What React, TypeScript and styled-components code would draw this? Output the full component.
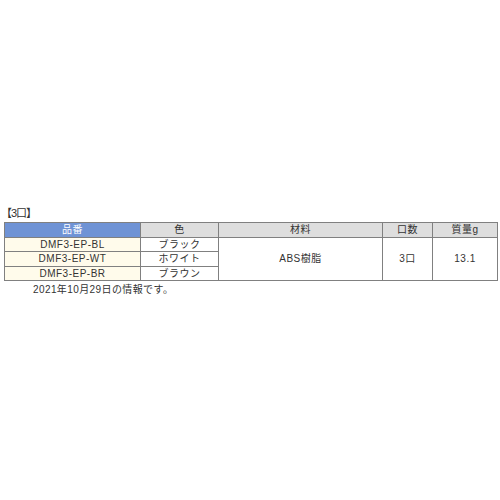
import React from 'react';
import styled, { createGlobalStyle } from 'styled-components';

const GlobalStyle = createGlobalStyle`
  html, body {
    margin: 0;
    padding: 0;
    background: #ffffff;
  }
  body {
    font-family: "Liberation Sans", "Noto Sans CJK JP", sans-serif;
    color: #222222;
  }
`;

type Row = {
  code: string;
  color: string;
};

const rows: Row[] = [
  { code: 'DMF3-EP-BL', color: 'ブラック' },
  { code: 'DMF3-EP-WT', color: 'ホワイト' },
  { code: 'DMF3-EP-BR', color: 'ブラウン' },
];

function App() {
  return (
    <Page>
      <GlobalStyle />
      <Section>
        <Title>【3口】</Title>
        <SpecTable>
          <colgroup>
            <col style={{ width: 136 }} />
            <col style={{ width: 78 }} />
            <col style={{ width: 164 }} />
            <col style={{ width: 50 }} />
            <col />
          </colgroup>
          <thead>
            <tr>
              <HeadCell $primary>品番</HeadCell>
              <HeadCell>色</HeadCell>
              <HeadCell>材料</HeadCell>
              <HeadCell>口数</HeadCell>
              <HeadCell>質量g</HeadCell>
            </tr>
          </thead>
          <tbody>
            {rows.map((row, index) => (
              <tr key={row.code}>
                <CodeCell>{row.code}</CodeCell>
                <Cell>{row.color}</Cell>
                {index === 0 && (
                  <>
                    <Cell rowSpan={3}>ABS樹脂</Cell>
                    <Cell rowSpan={3}>3口</Cell>
                    <Cell rowSpan={3}>13.1</Cell>
                  </>
                )}
              </tr>
            ))}
          </tbody>
        </SpecTable>
        <Note>2021年10月29日の情報です。</Note>
      </Section>
    </Page>
  );
}

const Page = styled.div`
  width: 500px;
  height: 500px;
  display: flex;
  flex-direction: column;
  justify-content: flex-start;
  padding: 206px 2px 0 4px;
  box-sizing: border-box;
`;

const Section = styled.div`
  display: flex;
  flex-direction: column;
`;

const Title = styled.div`
  font-size: 11px;
  line-height: 14px;
  height: 16px;
  margin-left: -3px;
  letter-spacing: -1px;
  color: #333333;
`;

const SpecTable = styled.table`
  width: 494px;
  border-collapse: collapse;
  table-layout: fixed;
  font-size: 10px;
  letter-spacing: 0.5px;

  td, th {
    border: 1px solid #808080;
    text-align: center;
    padding: 0;
    height: 13.5px;
    line-height: 13px;
    font-weight: normal;
  }
`;

const HeadCell = styled.th<{ $primary?: boolean }>`
  background: ${(p) => (p.$primary ? '#6f93d5' : '#dedede')};
  color: ${(p) => (p.$primary ? '#ffffff' : '#333333')};
`;

const Cell = styled.td`
  background: #ffffff;
  color: #333333;
`;

const CodeCell = styled.td`
  background: #fffbeb;
  color: #333333;
`;

const Note = styled.div`
  font-size: 10px;
  line-height: 13px;
  margin-top: 2px;
  padding-left: 29px;
  letter-spacing: 0.4px;
  color: #333333;
`;

export default App;
